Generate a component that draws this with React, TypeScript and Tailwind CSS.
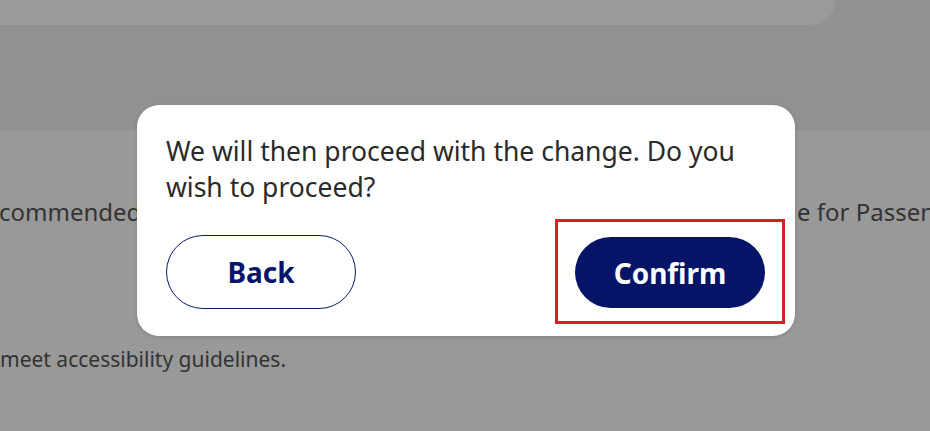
import React from "react";

export default function App() {
  const font = { fontFamily: '"Noto Sans", "Open Sans", Arial, sans-serif' };
  return (
    <div className="relative w-[930px] h-[431px] overflow-hidden bg-[#999999]" style={font}>
      <div className="h-[130px] bg-[#919191] pr-[95px]">
        <div className="h-[25px] bg-[#9a9a9a] rounded-br-[24px]" />
      </div>
      <div className="pt-[66px] text-[24px] leading-[32px] text-[#333333] whitespace-nowrap grid grid-cols-[797px_1fr]">
        <span className="-ml-[1px]">commended</span>
        <span>e for Passengers</span>
      </div>
      <div className="pt-[117px] text-[21px] leading-[28px] text-[#333333] whitespace-nowrap">
        meet accessibility guidelines.
      </div>

      <div className="absolute left-[137px] top-[105px] w-[658px] h-[231px] bg-white rounded-[22px] shadow-[0_1px_4px_rgba(0,0,0,0.15)] px-[29px] pt-[28px]">
        <p className="text-[26.5px] leading-[36px] text-[#2a2a2a]">
          We will then proceed with the change. Do you
          <br />
          wish to proceed?
        </p>
        <div className="flex justify-between items-center mt-[14px]">
          <button className="w-[190px] h-[74px] rounded-full border-[1.5px] border-[#0b1a6b] text-[#061569] text-[28px] font-bold bg-white">
            Back
          </button>
          <div className="border-[3px] border-[#d61f26] pl-[17px] pr-[17px] pt-[15px] pb-[13px] -mr-[19px]">
            <button className="w-[190px] h-[71px] rounded-full bg-[#051467] text-white text-[28px] font-bold">
              Confirm
            </button>
          </div>
        </div>
      </div>
    </div>
  );
}
